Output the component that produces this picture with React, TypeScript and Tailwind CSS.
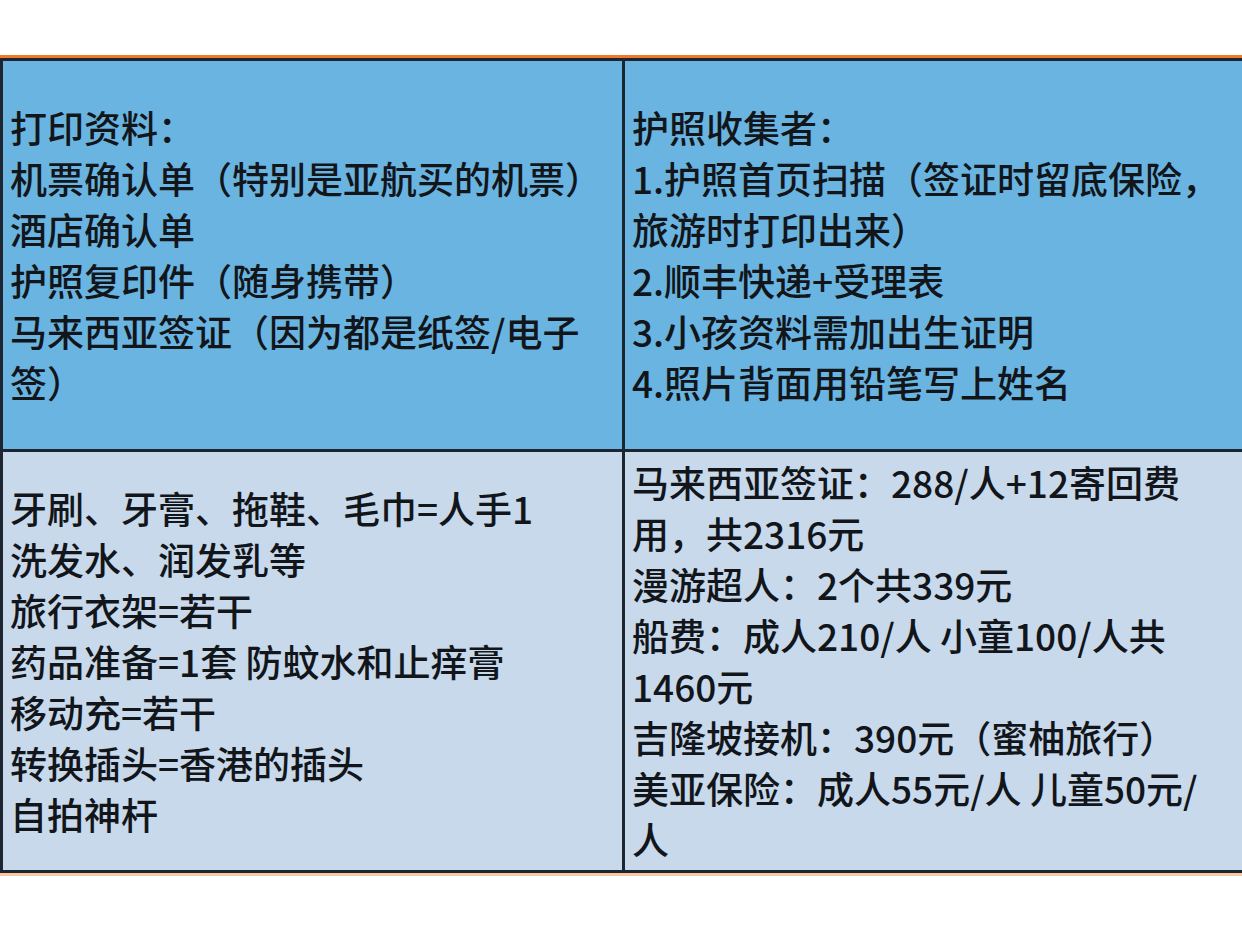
const headerLeft = [
  "打印资料：",
  "机票确认单（特别是亚航买的机票）",
  "酒店确认单",
  "护照复印件（随身携带）",
  "马来西亚签证（因为都是纸签/电子",
  "签）",
];

const headerRight = [
  "护照收集者：",
  "1.护照首页扫描（签证时留底保险，",
  "旅游时打印出来）",
  "2.顺丰快递+受理表",
  "3.小孩资料需加出生证明",
  "4.照片背面用铅笔写上姓名",
];

const bodyLeft = [
  "牙刷、牙膏、拖鞋、毛巾=人手1",
  "洗发水、润发乳等",
  "旅行衣架=若干",
  "药品准备=1套 防蚊水和止痒膏",
  "移动充=若干",
  "转换插头=香港的插头",
  "自拍神杆",
];

const bodyRight = [
  "马来西亚签证：288/人+12寄回费",
  "用，共2316元",
  "漫游超人：2个共339元",
  "船费：成人210/人 小童100/人共",
  "1460元",
  "吉隆坡接机：390元（蜜柚旅行）",
  "美亚保险：成人55元/人 儿童50元/",
  "人",
];

function Cell({ lines, className }: { lines: string[]; className: string }) {
  return (
    <div className={`flex items-center px-[7px] border-[#1c2530] ${className}`}>
      <div>
        {lines.map((l, i) => (
          <div key={i} className="whitespace-nowrap leading-[51px]">
            {l}
          </div>
        ))}
      </div>
    </div>
  );
}

export default function App() {
  return (
    <div
      className="h-[931px] bg-white pt-[55px] text-[37px] font-medium text-[#12161a] overflow-hidden"
      style={{ fontFamily: '"Noto Sans CJK SC", "Noto Sans", sans-serif' }}
    >
      <div className="h-[3px] bg-[#ef7a2a]" />
      <div className="grid grid-cols-[622px_1fr] grid-rows-[391px_421px] border-t-[3px] border-l-[3px] border-[#1c2530]">
        <Cell lines={headerLeft} className="bg-[#6ab4e1] border-r-[3px] border-b-[3px]" />
        <Cell lines={headerRight} className="bg-[#6ab4e1] border-b-[3px]" />
        <Cell lines={bodyLeft} className="bg-[#c8d9ec] border-r-[3px] border-b-[3px]" />
        <Cell lines={bodyRight} className="bg-[#c8d9ec] border-b-[3px]" />
      </div>
      <div className="h-[3px] bg-[#f8c8a6]" />
    </div>
  );
}
